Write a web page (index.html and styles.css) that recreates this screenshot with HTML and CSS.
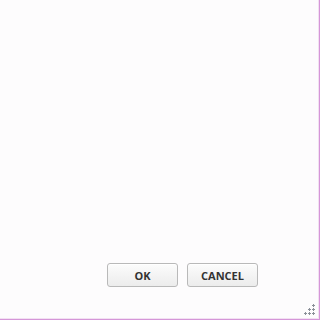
FILE: index.html
```html
<!DOCTYPE html>
<html>
<head>
<meta charset="utf-8">
<link rel="stylesheet" href="styles.css">
</head>
<body>
<div class="window">
  <div class="content"></div>
  <div class="buttons">
    <button class="btn">OK</button>
    <button class="btn">CANCEL</button>
  </div>
  <svg class="grip" width="12" height="12" viewBox="0 0 12 12">
    <g fill="#8a8f98">
      <path d="M9 0h1v1h1v1h-1v1h-1v-1h-1v-1h1z"/>
      <path d="M5 4h1v1h1v1h-1v1h-1v-1h-1v-1h1z"/>
      <path d="M9 4h1v1h1v1h-1v1h-1v-1h-1v-1h1z"/>
      <path d="M1 8h1v1h1v1h-1v1h-1v-1h-1v-1h1z"/>
      <path d="M5 8h1v1h1v1h-1v1h-1v-1h-1v-1h1z"/>
      <path d="M9 8h1v1h1v1h-1v1h-1v-1h-1v-1h1z"/>
    </g>
  </svg>
</div>
</body>
</html>
```
FILE: styles.css
```css
html, body {
  margin: 0;
  padding: 0;
  background: #fdfcfd;
}
.window {
  position: relative;
  width: 320px;
  height: 320px;
  box-sizing: border-box;
  border-right: 1px solid #d596d8;
  border-bottom: 1px solid #d596d8;
  box-shadow: inset -1px -1px 0 #f2e0f2;
  background: #fdfcfd;
  display: flex;
  flex-direction: column;
}
.content {
  flex: 1;
}
.buttons {
  display: flex;
  justify-content: flex-end;
  gap: 9px;
  padding: 0 61px 32px 0;
}
.btn {
  width: 71px;
  height: 24px;
  box-sizing: border-box;
  border: 1px solid #b9b9b9;
  border-radius: 3px;
  background: linear-gradient(#fcfcfc, #ececec);
  font-family: "Open Sans", "DejaVu Sans", sans-serif;
  font-weight: bold;
  font-size: 11px;
  color: #333;
  padding: 0;
  box-shadow: inset 0 1px 0 #ffffff;
}
.grip {
  position: absolute;
  right: 3px;
  bottom: 3px;
}
```
